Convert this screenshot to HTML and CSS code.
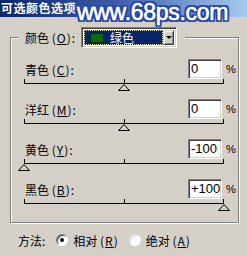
FILE: index.html
```html
<!DOCTYPE html>
<html lang="zh">
<head>
<meta charset="utf-8">
<title>可选颜色选项</title>
<link rel="stylesheet" href="styles.css">
</head>
<body>
<div class="titlebar">
  <span class="title">可选颜色选项</span>
  <span class="watermark">www.68ps.com</span>
</div>
<div class="content">
  <div class="group">
    <div class="legend">
      <span class="legend-label">颜色 <span class="key">(<u>O</u>):</span></span>
      <div class="select">
        <div class="select-value"><span class="swatch"></span><span class="select-text">绿色</span></div>
        <div class="select-btn"><span class="arrow"></span></div>
      </div>
    </div>
    <div class="rows">
      <div class="row">
        <div class="field"><span class="label">青色 <span class="key">(<u>C</u>):</span></span><span class="input">0</span><span class="pct">%</span></div>
        <div class="slider"><div class="track"></div><svg class="thumb" style="left:50%" width="12" height="7" viewBox="0 0 12 7"><polygon points="6,0.5 11.5,6.5 0.5,6.5" fill="none" stroke="#000" stroke-width="1"/></svg></div>
      </div>
      <div class="row">
        <div class="field"><span class="label">洋红 <span class="key">(<u>M</u>):</span></span><span class="input">0</span><span class="pct">%</span></div>
        <div class="slider"><div class="track"></div><svg class="thumb" style="left:50%" width="12" height="7" viewBox="0 0 12 7"><polygon points="6,0.5 11.5,6.5 0.5,6.5" fill="none" stroke="#000" stroke-width="1"/></svg></div>
      </div>
      <div class="row">
        <div class="field"><span class="label">黄色 <span class="key">(<u>Y</u>):</span></span><span class="input">-100</span><span class="pct">%</span></div>
        <div class="slider"><div class="track"></div><svg class="thumb" style="left:0%" width="12" height="7" viewBox="0 0 12 7"><polygon points="6,0.5 11.5,6.5 0.5,6.5" fill="none" stroke="#000" stroke-width="1"/></svg></div>
      </div>
      <div class="row">
        <div class="field"><span class="label">黑色 <span class="key">(<u>B</u>):</span></span><span class="input">+100</span><span class="pct">%</span></div>
        <div class="slider"><div class="track"></div><svg class="thumb" style="left:100%" width="12" height="7" viewBox="0 0 12 7"><polygon points="6,0.5 11.5,6.5 0.5,6.5" fill="none" stroke="#000" stroke-width="1"/></svg></div>
      </div>
    </div>
  </div>
  <div class="method">
    <span class="method-label">方法:</span>
    <span class="radio checked"></span>
    <span class="radio-text">相对 <span class="key">(<u>R</u>)</span></span>
    <span class="radio light"></span>
    <span class="radio-text">绝对 <span class="key">(<u>A</u>)</span></span>
  </div>
</div>
</body>
</html>
```
FILE: styles.css
```css
* { box-sizing: border-box; }
html, body { margin: 0; padding: 0; }
body {
  width: 247px;
  height: 256px;
  overflow: hidden;
  background: #d4d0c8;
  font-family: "Noto Sans CJK SC", "Liberation Sans", sans-serif;
  font-size: 12px;
  color: #000;
}
u { text-decoration: underline; text-underline-offset: 1px; }
.key { letter-spacing: 1px; }

.titlebar {
  position: relative;
  height: 17px;
  background: linear-gradient(to right, #0a246a 0%, #3a5aa8 45%, #a6caf0 100%);
}
.title {
  display: block;
  color: #fff;
  font-weight: bold;
  font-size: 12px;
  letter-spacing: 0.5px;
  line-height: 15px;
  padding-left: 1px;
}
.watermark {
  position: absolute;
  left: 77px;
  top: 1px;
  z-index: 2;
  font-family: "Liberation Sans", sans-serif;
  font-size: 23px;
  line-height: 23px;
  letter-spacing: -0.3px;
  color: #fff;
  -webkit-text-stroke: 0.6px #fff;
  white-space: nowrap;
  text-shadow:
    1px 0 0 #1f40a0, -1px 0 0 #1f40a0, 0 1px 0 #1f40a0, 0 -1px 0 #1f40a0,
    1px 1px 0 #1f40a0, -1px -1px 0 #1f40a0, 1px -1px 0 #1f40a0, -1px 1px 0 #1f40a0,
    2px 0 0 #2a4cb0, -2px 0 0 #2a4cb0, 0 2px 0 #2a4cb0, 0 -2px 0 #2a4cb0,
    2px 2px 0 #2a4cb0, -2px -2px 0 #2a4cb0, 2px -2px 0 #2a4cb0, -2px 2px 0 #2a4cb0;
}

.content { padding-left: 10px; }

.group {
  margin-top: 20px;
  width: 229px;
  height: 186px;
  border: 1px solid #808080;
  box-shadow: inset 1px 1px 0 #fff, 1px 1px 0 #fff;
}
.legend {
  display: flex;
  align-items: center;
  width: max-content;
  height: 21px;
  margin: -11px 0 0 7px;
  padding: 0 8px 0 7px;
  background: #d4d0c8;
}
.legend-label { width: 56px; white-space: nowrap; }
.select {
  display: flex;
  width: 96px;
  height: 21px;
  padding: 2px;
  background: #fff;
  border: 1px solid;
  border-color: #808080 #fff #fff #808080;
  box-shadow: inset 1px 1px 0 #404040, inset -1px -1px 0 #d4d0c8;
}
.select-value {
  flex: 1;
  display: flex;
  align-items: center;
  background: #0a246a;
  border: 1px dotted #e8e8c0;
  color: #fff;
}
.swatch {
  width: 14px;
  height: 10px;
  margin-left: 5px;
  background: #0b6a0b;
  border: 1px solid #033003;
}
.select-text { margin-left: 6px; line-height: 14px; }
.select-btn {
  width: 11px;
  display: flex;
  align-items: center;
  justify-content: center;
  background: #d4d0c8;
  border: 1px solid;
  border-color: #d4d0c8 #404040 #404040 #d4d0c8;
  box-shadow: inset 1px 1px 0 #fff, inset -1px -1px 0 #808080;
}
.arrow {
  width: 0;
  height: 0;
  border-left: 3px solid transparent;
  border-right: 3px solid transparent;
  border-top: 3px solid #000;
}

.rows { padding-top: 11px; }
.field {
  display: flex;
  align-items: center;
  height: 20px;
  padding-left: 14px;
}
.label { flex: 1; white-space: nowrap; }
.input {
  width: 34px;
  height: 20px;
  padding-left: 2px;
  background: #fff;
  border: 1px solid;
  border-color: #808080 #fff #fff #808080;
  box-shadow: inset 1px 1px 0 #404040, inset -1px -1px 0 #d4d0c8;
  font-family: "Liberation Sans", sans-serif;
  font-size: 13px;
  line-height: 17px;
}
.pct {
  width: 11px;
  margin-left: 4px;
  margin-right: 1px;
  font-family: "Liberation Sans", sans-serif;
  font-size: 11px;
}
.slider {
  position: relative;
  width: 200px;
  height: 12px;
  margin: 0 0 8px 13px;
}
.track {
  position: relative;
  height: 5px;
  border: 1px solid #000;
  border-top: none;
}
.track::after {
  content: "";
  position: absolute;
  left: 99px;
  top: 0;
  width: 1px;
  height: 4px;
  background: #000;
}
.thumb {
  position: absolute;
  top: 5px;
  margin-left: -6px;
  display: block;
}

.method {
  display: flex;
  align-items: center;
  height: 16px;
  margin-top: 9px;
  padding-left: 8px;
}
.method-label { margin-right: 11px; }
.radio {
  width: 12px;
  height: 12px;
  border-radius: 50%;
  background: #fff;
  border: 1px solid;
  border-color: #808080 #fff #fff #808080;
  box-shadow: inset 1px 1px 0 #404040;
  display: flex;
  align-items: center;
  justify-content: center;
}
.radio.checked::after {
  content: "";
  width: 4px;
  height: 4px;
  border-radius: 50%;
  background: #000;
}
.radio.light {
  border-color: #e8e6e0 #fff #fff #e8e6e0;
  box-shadow: inset 1px 1px 0 #d8d6d0;
}
.radio-text { margin-left: 5px; margin-right: 10px; white-space: nowrap; }
```
